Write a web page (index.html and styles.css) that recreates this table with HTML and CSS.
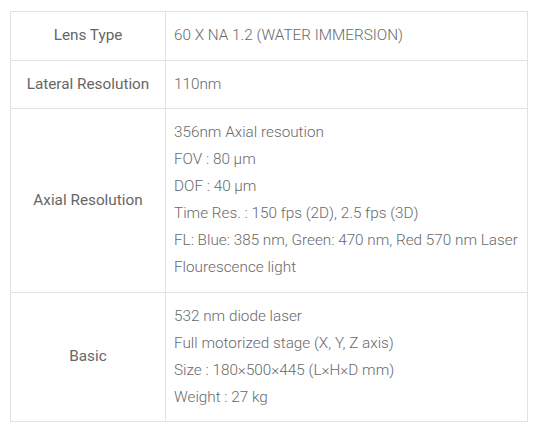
FILE: index.html
```html
<!DOCTYPE html>
<html>
<head>
<meta charset="utf-8">
<link rel="stylesheet" href="styles.css">
</head>
<body>
<table class="spec">
  <tr>
    <th class="label">Lens Type</th>
    <td class="value">60 X NA 1.2 (WATER IMMERSION)</td>
  </tr>
  <tr>
    <th class="label">Lateral Resolution</th>
    <td class="value">110nm</td>
  </tr>
  <tr>
    <th class="label">Axial Resolution</th>
    <td class="value">356nm Axial resoution<br>FOV : 80 μm<br>DOF : 40 μm<br>Time Res. : 150 fps (2D), 2.5 fps (3D)<br>FL: Blue: 385 nm, Green: 470 nm, Red 570 nm Laser<br>Flourescence light</td>
  </tr>
  <tr>
    <th class="label">Basic</th>
    <td class="value">532 nm diode laser<br>Full motorized stage (X, Y, Z axis)<br>Size : 180×500×445 (L×H×D mm)<br>Weight : 27 kg</td>
  </tr>
</table>
</body>
</html>
```
FILE: styles.css
```css
html, body {
  margin: 0;
  background: #fff;
}
body {
  padding: 11px 10px 0 10px;
  font-family: Roboto, "Liberation Sans", sans-serif;
}
.spec {
  width: 518px;
  border-collapse: collapse;
  font-size: 15.3px;
  line-height: 27px;
}
.spec th, .spec td {
  border: 1px solid #e2e2e2;
  padding: 10px 8px 10.5px 8px;
  vertical-align: middle;
}
.label {
  width: 138px;
  text-align: center;
  font-weight: 400;
  color: #666;
}
.value {
  text-align: left;
  font-weight: 300;
  color: #6a6a6a;
}
```
